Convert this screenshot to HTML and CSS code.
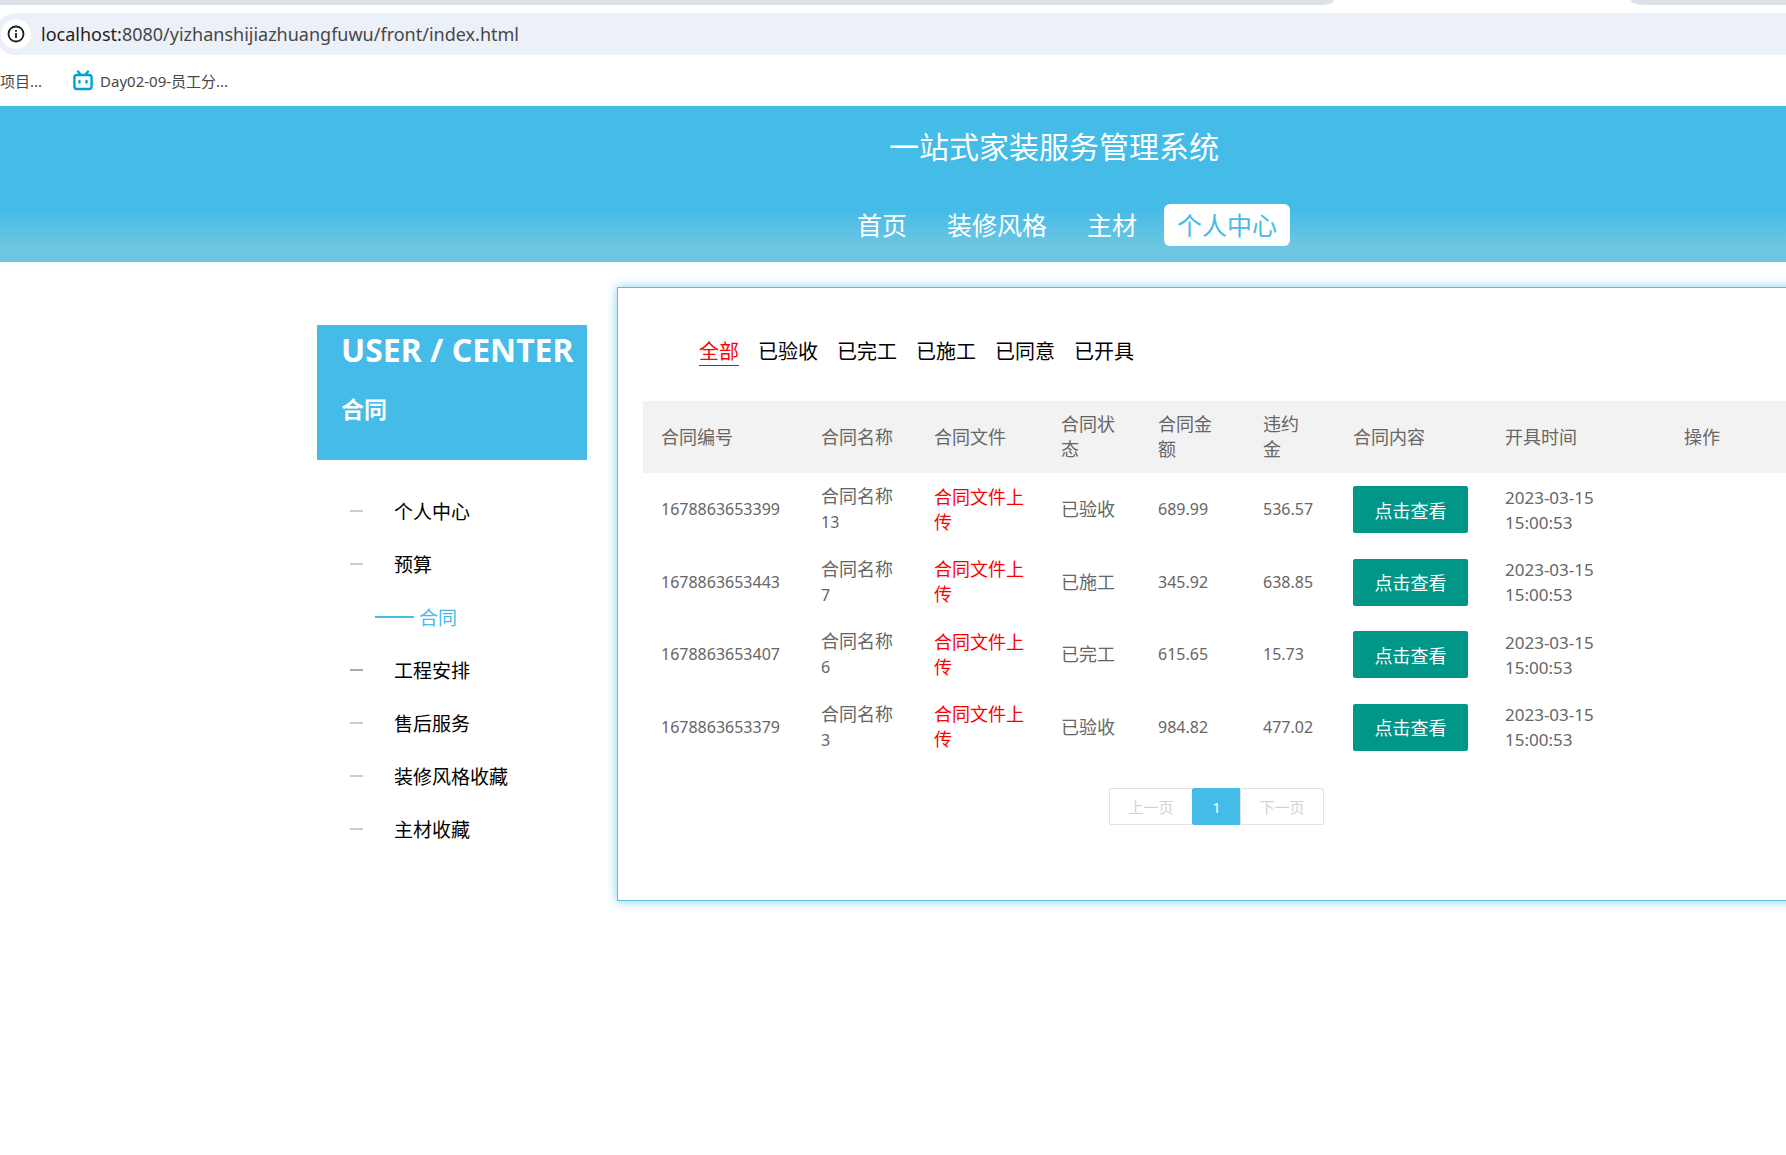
FILE: index.html
```html
<!DOCTYPE html>
<html lang="zh-CN">
<head>
<meta charset="utf-8">
<title>一站式家装服务管理系统</title>
<link rel="stylesheet" href="styles.css">
</head>
<body>
<div class="browser">
  <div class="tabstrip"><span class="tabs-left"></span><span class="tabs-right"></span></div>
  <div class="omnibox">
    <span class="site-info">
      <svg width="18" height="18" viewBox="0 0 18 18" fill="none" stroke="#1f1f1f" stroke-width="1.8"><circle cx="9" cy="9" r="7.5"/><path d="M9 8v5M9 5v1.800"/></svg>
    </span>
    <span class="url"><b>localhost:</b>8080/yizhanshijiazhuangfuwu/front/index.html</span>
  </div>
  <div class="bookmarks">
    <a href="#" class="bookmark">项目...</a>
    <a href="#" class="bookmark">
      <svg width="20" height="21" viewBox="0 0 20 21" fill="none" stroke="#00a1d6" stroke-width="2.4" stroke-linecap="round"><rect x="1.4" y="5" width="17.2" height="14" rx="2.5"/><path d="M5 1.5l2.500 3M15 1.5l-2.500 3M6.500 11v1.500M13.500 11v1.500"/></svg>
      Day02-09-员工分...
    </a>
  </div>
</div>
<header class="site-header">
  <h1 class="site-title">一站式家装服务管理系统</h1>
  <nav class="site-nav">
    <a href="#">首页</a>
    <a href="#">装修风格</a>
    <a href="#">主材</a>
    <a href="#" class="active">个人中心</a>
  </nav>
</header>
<main class="main">
  <aside class="sidebar">
    <div class="side-head">
      <h2>USER / CENTER</h2>
      <h3>合同</h3>
    </div>
    <nav class="side-menu">
      <a href="#">个人中心</a>
      <a href="#">预算</a>
      <a href="#" class="active">合同</a>
      <a href="#" class="hover">工程安排</a>
      <a href="#">售后服务</a>
      <a href="#">装修风格收藏</a>
      <a href="#">主材收藏</a>
    </nav>
  </aside>
  <section class="panel">
    <nav class="filters">
      <a href="#" class="active">全部</a>
      <a href="#">已验收</a>
      <a href="#">已完工</a>
      <a href="#">已施工</a>
      <a href="#">已同意</a>
      <a href="#">已开具</a>
    </nav>
    <table class="contracts">
      <colgroup>
        <col class="c-id"><col class="c-name"><col class="c-file"><col class="c-status"><col class="c-sum"><col class="c-fine"><col class="c-body"><col class="c-time"><col>
      </colgroup>
      <thead>
        <tr><th>合同编号</th><th>合同名称</th><th>合同文件</th><th>合同状态</th><th>合同金额</th><th>违约金</th><th>合同内容</th><th>开具时间</th><th>操作</th></tr>
      </thead>
      <tbody>
        <tr><td class="num">1678863653399</td><td>合同名称<span class="num">13</span></td><td><a href="#" class="file">合同文件上传</a></td><td>已验收</td><td class="num">689.99</td><td class="num">536.57</td><td><button type="button" class="view">点击查看</button></td><td class="time">2023-03-15 15:00:53</td><td></td></tr>
        <tr><td class="num">1678863653443</td><td>合同名称<span class="num">7</span></td><td><a href="#" class="file">合同文件上传</a></td><td>已施工</td><td class="num">345.92</td><td class="num">638.85</td><td><button type="button" class="view">点击查看</button></td><td class="time">2023-03-15 15:00:53</td><td></td></tr>
        <tr><td class="num">1678863653407</td><td>合同名称<span class="num">6</span></td><td><a href="#" class="file">合同文件上传</a></td><td>已完工</td><td class="num">615.65</td><td class="num">15.73</td><td><button type="button" class="view">点击查看</button></td><td class="time">2023-03-15 15:00:53</td><td></td></tr>
        <tr><td class="num">1678863653379</td><td>合同名称<span class="num">3</span></td><td><a href="#" class="file">合同文件上传</a></td><td>已验收</td><td class="num">984.82</td><td class="num">477.02</td><td><button type="button" class="view">点击查看</button></td><td class="time">2023-03-15 15:00:53</td><td></td></tr>
      </tbody>
    </table>
    <div class="pager">
      <button type="button" disabled>上一页</button>
      <button type="button" class="current">1</button>
      <button type="button" disabled>下一页</button>
    </div>
  </section>
</main>
</body>
</html>
```
FILE: styles.css
```css
* { box-sizing: border-box; }
body {
  margin: 0;
  background: #fff;
  color: #000;
  font-family: "Noto Sans", "Noto Sans CJK SC", sans-serif;
  font-size: 18px;
}
a { color: inherit; text-decoration: none; }
h1, h2, h3 { margin: 0; }
button { font-family: inherit; }

/* Browser chrome */
.browser { height: 106px; overflow: hidden; }
.tabstrip { display: flex; justify-content: space-between; height: 5px; }
.tabs-left, .tabs-right { background: #dde1e8; }
.tabs-left { width: 1334px; border-bottom-right-radius: 12px 5px; }
.tabs-right { width: 155px; border-bottom-left-radius: 12px 5px; }
.omnibox {
  display: flex;
  align-items: center;
  gap: 10px;
  height: 42px;
  margin: 8px 0 0 -5px;
  padding-left: 6px;
  border-radius: 21px 0 0 21px;
  background: #ecf0f9;
}
.site-info {
  display: flex;
  align-items: center;
  justify-content: center;
  width: 30px;
  height: 30px;
  border-radius: 50%;
  background: #fff;
}
.url { color: #474747; font-size: 18px; }
.url b { color: #1f1f1f; font-weight: 400; }
.bookmarks { display: flex; align-items: center; gap: 31px; height: 51px; color: #474747; font-size: 15px; }
.bookmark { display: flex; align-items: center; gap: 7px; }

/* Site header */
.site-header {
  display: flex;
  flex-direction: column;
  align-items: center;
  gap: 35px;
  height: 156px;
  padding: 19px 0 0 322px;
  background: linear-gradient(#45bbe8 66%, #6cc6e1 90%);
  color: #fff;
}
.site-title { font-size: 30px; line-height: 44px; font-weight: 400; }
.site-nav { display: flex; gap: 14px; padding-left: 26px; }
.site-nav a { padding: 0 13px; border-radius: 6px; font-size: 25px; line-height: 42px; }
.site-nav .active { background: #fff; color: #45bbe8; }

/* Layout */
.main {
  display: flex;
  align-items: flex-start;
  gap: 30px;
  padding: 25px 0 30px 317px;
  overflow: hidden;
}
.sidebar { flex: none; width: 270px; padding-top: 38px; }
.side-head { height: 135px; padding: 0 0 0 24px; background: #45bbe8; color: #fff; white-space: nowrap; }
.side-head h2 { font-size: 32px; line-height: 50px; }
.side-head h3 { padding-top: 17px; font-size: 23px; line-height: 34px; }
.side-menu { display: flex; flex-direction: column; padding: 24px 0 0 33px; }
.side-menu a { display: flex; align-items: center; gap: 31px; height: 53px; font-size: 19px; }
.side-menu a::before { content: ""; width: 13px; height: 2px; background: #ccc; }
.side-menu .hover::before { background: #aaa; }
.side-menu .active { gap: 5px; padding-left: 25px; color: #45bbe8; }
.side-menu .active::before { width: 39px; background: #45bbe8; }

/* Contract panel */
.panel {
  flex: 1;
  min-width: 0;
  margin-right: -30px;
  padding: 50px 25px 75px;
  border: 1px solid #5cc0e3;
  box-shadow: 0 0 10px #7fcde8;
}
.filters { display: flex; gap: 19px; padding: 0 0 35px 56px; }
.filters a { border-bottom: 1px solid transparent; font-size: 20px; line-height: 27px; }
.filters .active { border-color: #f00; color: #f00; }
.contracts { width: 100%; border-collapse: collapse; table-layout: fixed; color: #666; line-height: 25px; }
.c-id { width: 160px; }
.c-name { width: 113px; }
.c-file { width: 127px; }
.c-status { width: 97px; }
.c-sum { width: 105px; }
.c-fine { width: 90px; }
.c-body { width: 152px; }
.c-time { width: 179px; }
.contracts th, .contracts td { height: 72px; padding: 0 18px; font-weight: 400; text-align: left; }
.contracts th { padding-right: 20px; }
.contracts tbody tr:nth-child(odd) td { height: 73px; }
.contracts thead { background: #f2f2f2; }
.contracts .num { font-size: 16px; }
.contracts .time { padding-right: 60px; font-size: 17px; }
.file { color: #f00; }
.view {
  width: 115px;
  height: 47px;
  padding: 0;
  border: 0;
  border-radius: 2px;
  background: #009688;
  color: #fff;
  font-size: 18px;
}
.pager { display: flex; justify-content: center; padding-top: 25px; }
.pager button {
  width: 84px;
  height: 37px;
  padding: 0;
  border: 1px solid #e2e2e2;
  border-radius: 2px;
  background: #fff;
  color: #d2d2d2;
  font-size: 15px;
}
.pager .current { width: 49px; margin: 0 -1px; border-color: #45bbe8; background: #45bbe8; color: #fff; }
```
